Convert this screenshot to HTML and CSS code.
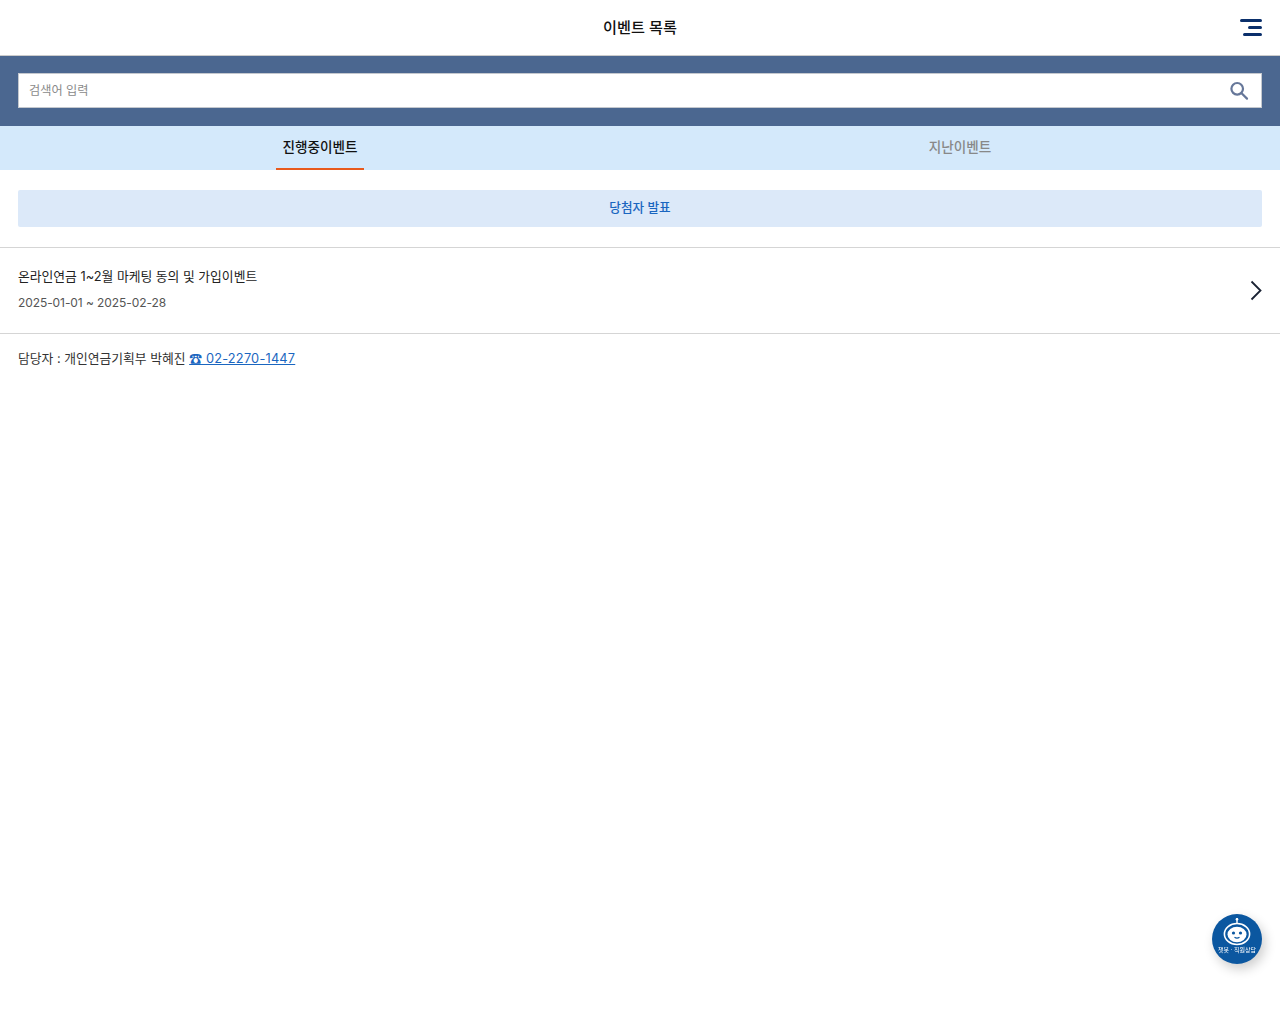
FILE: index.html
```html
<!DOCTYPE html>
<html lang="ko">
<head>
  <meta charset="UTF-8">
  <title>이벤트 목록</title>
  <link rel="stylesheet" href="styles.css">
</head>
<body>
  <header class="top-bar">
    <h1>이벤트 목록</h1>
    <button class="menu-btn" aria-label="메뉴">
      <span class="line-a"></span>
      <span class="line-b"></span>
      <span class="line-c"></span>
    </button>
  </header>

  <div class="search-bar">
    <div class="search-box">
      <input type="text" placeholder="검색어 입력">
      <svg class="search-icon" width="20" height="20" viewBox="0 0 20 20" fill="none" stroke="#667799" stroke-width="2.2">
        <circle cx="8.2" cy="7.8" r="5.8"/>
        <path d="M12.6 12.2L18 17.6" stroke-linecap="round"/>
      </svg>
    </div>
  </div>

  <nav class="tabs">
    <a class="tab active"><span>진행중이벤트</span></a>
    <a class="tab"><span>지난이벤트</span></a>
  </nav>

  <div class="winner-wrap">
    <a class="winner-btn">당첨자 발표</a>
  </div>

  <ul class="event-list">
    <li class="event-item">
      <div class="event-text">
        <p class="event-title">온라인연금 1~2월 마케팅 동의 및 가입이벤트</p>
        <p class="event-date">2025-01-01 ~ 2025-02-28</p>
      </div>
      <svg class="chevron" width="14" height="22" viewBox="0 0 14 22" fill="none" stroke="#1a2233" stroke-width="1.8">
        <path d="M2.5 1.5L11.5 10.5L2.5 19.5"/>
      </svg>
    </li>
  </ul>

  <p class="contact">담당자 : 개인연금기획부 박혜진 <a href="tel:02-2270-1447">☎ 02-2270-1447</a></p>

  <!-- 챗봇 버튼 -->
  <a class="chat-btn">
    <svg width="30" height="29" viewBox="0 0 30 29" fill="none">
      <path d="M15 1v5" stroke="#fff" stroke-width="1.4"/>
      <circle cx="15" cy="2.2" r="1.3" fill="#fff"/>
      <ellipse cx="15" cy="17" rx="12.6" ry="10.5" stroke="#fff" stroke-width="1.6"/>
      <ellipse cx="15" cy="17.5" rx="9.5" ry="7.8" fill="#fff"/>
      <circle cx="11.5" cy="16" r="1.6" fill="#0b57a0"/>
      <circle cx="18.5" cy="16" r="1.6" fill="#0b57a0"/>
      <path d="M12.5 20.2q2.5 1.8 5 0" stroke="#0b57a0" stroke-width="1.2"/>
    </svg>
    <span>챗봇 · 직원상담</span>
  </a>
</body>
</html>
```

FILE: styles.css
```css
* {
  box-sizing: border-box;
}

body {
  margin: 0;
  min-height: 1024px;
  background-color: #fff;
  color: #222;
  font-family: Inter, "Noto Sans CJK KR", sans-serif;
  font-size: 14px;
}

p, h1, ul {
  margin: 0;
  padding: 0;
}

ul {
  list-style: none;
}

.top-bar {
  position: relative;
  display: flex;
  justify-content: center;
  align-items: center;
  height: 56px;
  border-bottom: 1px solid #ccc;
}

.top-bar h1 {
  font-size: 15.2px;
  font-weight: 500;
  color: #111;
  margin-bottom: 4px;
}

.menu-btn {
  position: absolute;
  top: 19px;
  right: 18px;
  width: 22px;
  height: 17px;
  padding: 0;
  border: none;
  background: none;
}

.menu-btn span {
  position: absolute;
  right: 0;
  height: 3px;
  border-radius: 2px;
  background-color: #0a2f6b;
}

.line-a { top: 0; width: 22px; }
.line-b { top: 7px; width: 14px; }
.line-c { top: 14px; width: 19px; }

.search-bar {
  padding: 17px 18px 18px;
  background-color: #4b6790;
}

.search-box {
  display: flex;
  align-items: center;
  height: 35px;
  padding: 0 12px 0 10px;
  background-color: #fff;
  border: 1px solid #c4c8ce;
}

.search-box input {
  flex: 1;
  border: none;
  outline: none;
  padding: 0;
  font-family: inherit;
  font-size: 12.2px;
}

.search-box input::placeholder {
  color: #8a8a8a;
}

.tabs {
  display: flex;
  height: 44px;
  background-color: #d4e9fb;
}

.tab {
  flex: 1;
  display: flex;
  justify-content: center;
  color: #888;
  font-size: 13.6px;
  font-weight: 500;
}

.tab span {
  padding: 0 6px;
  line-height: 42px;
  height: 44px;
}

.tab.active {
  color: #111;
}

.tab.active span {
  border-bottom: 2px solid #e85a1c;
}

.winner-wrap {
  padding: 20px 18px;
  border-bottom: 1px solid #d5d5d5;
}

.winner-btn {
  display: block;
  height: 37px;
  line-height: 35px;
  text-align: center;
  font-size: 12.6px;
  font-weight: 500;
  color: #1a66c0;
  background-color: #dce9f9;
  border-radius: 2px;
}

.event-item {
  display: flex;
  justify-content: space-between;
  align-items: center;
  height: 86px;
  padding: 0 17px 0 18px;
  border-bottom: 1px solid #d5d5d5;
}

.event-text {
  margin-bottom: 2px;
}

.event-title {
  font-size: 12.8px;
  line-height: 20px;
  color: #222;
}

.event-date {
  margin-top: 7px;
  font-size: 12px;
  letter-spacing: -0.08px;
  line-height: 18px;
  color: #555;
}

.contact {
  padding: 15px 18px;
  font-size: 12.8px;
  line-height: 20px;
  color: #333;
}

.contact a {
  color: #1a66c0;
  letter-spacing: 0.2px;
}

.chat-btn {
  position: fixed;
  right: 18px;
  bottom: 60px;
  width: 50px;
  height: 50px;
  display: flex;
  flex-direction: column;
  align-items: center;
  padding-top: 3px;
  border-radius: 50%;
  background-color: #0b57a0;
  box-shadow: 3px 5px 12px rgba(0, 0, 0, 0.2);
  color: #fff;
}

.chat-btn span {
  font-size: 6px;
  line-height: 7px;
  white-space: nowrap;
}
```
